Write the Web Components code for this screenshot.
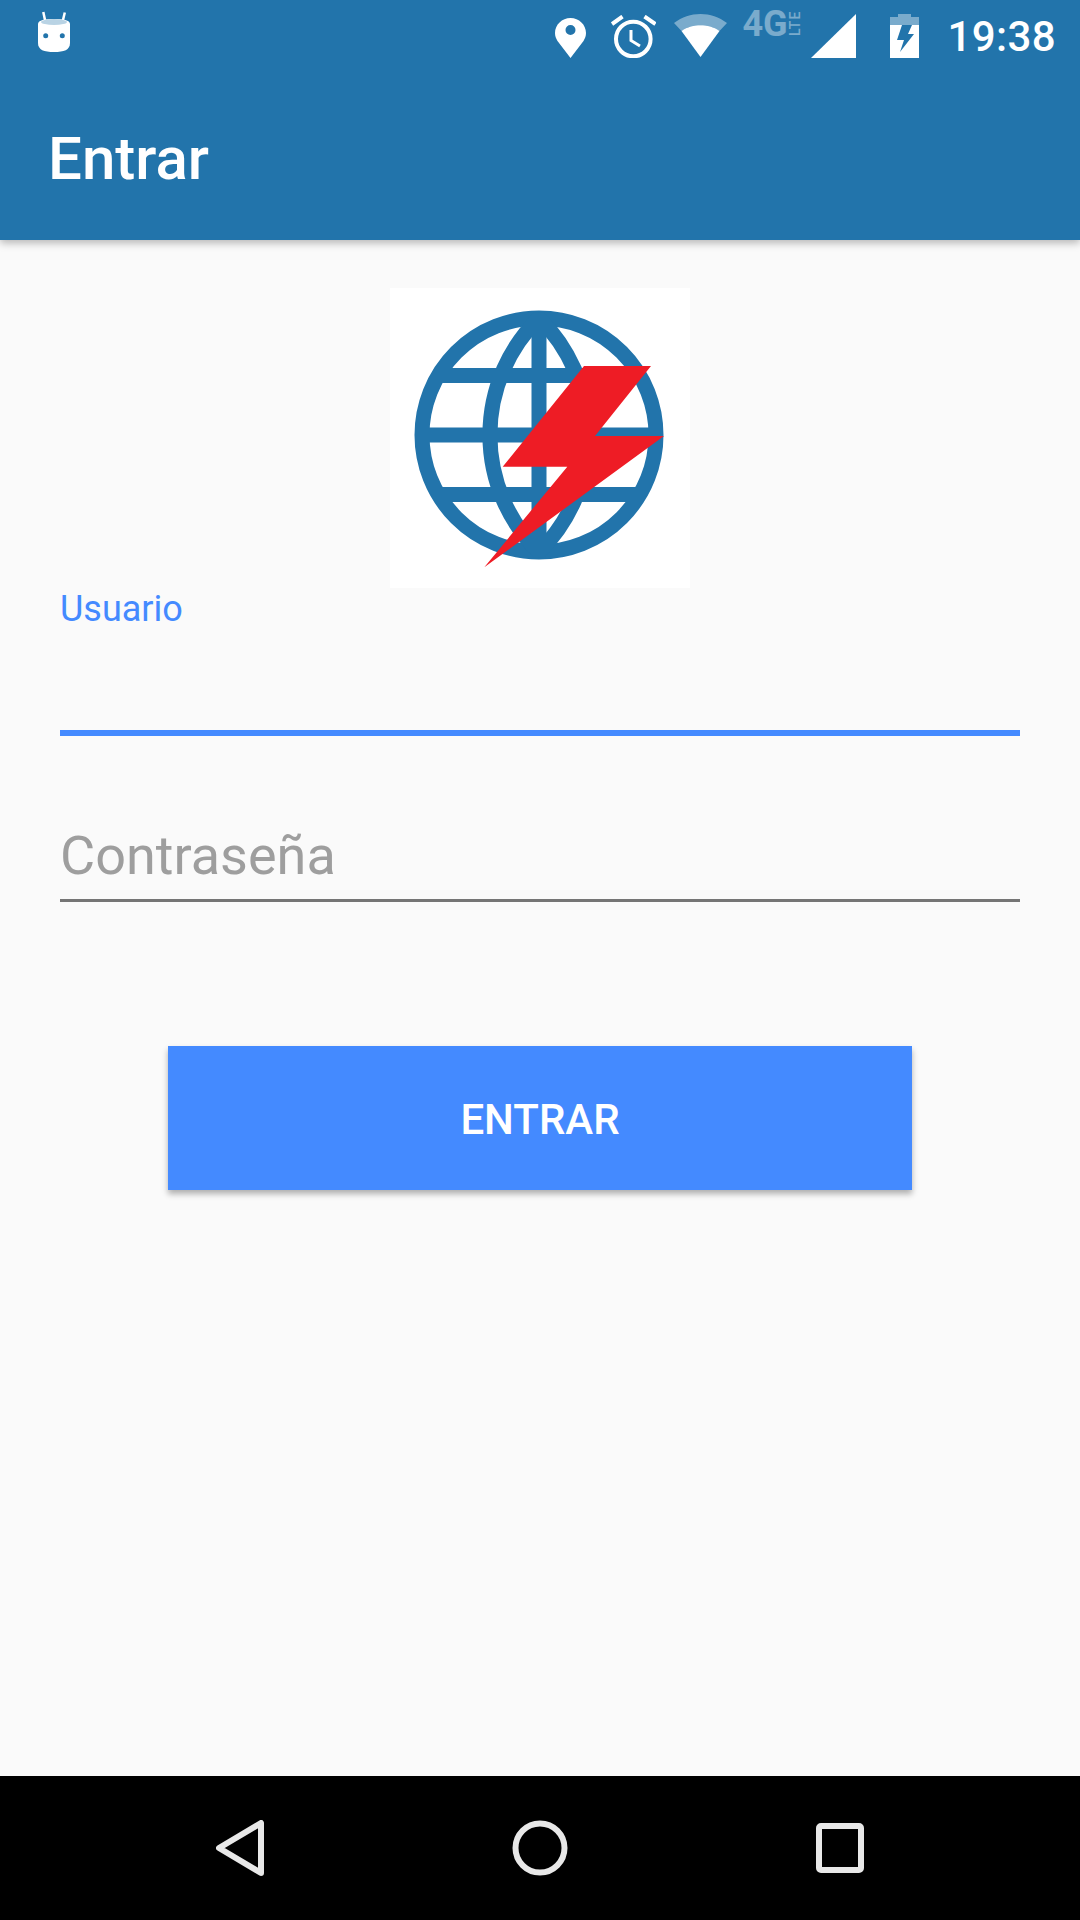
<!DOCTYPE html>
<html>
<head>
<meta charset="utf-8">
<style>
  html, body { margin: 0; padding: 0; }
  body {
    width: 1080px;
    height: 1920px;
    display: flex;
    flex-direction: column;
    background: #fafafa;
    font-family: Roboto, "Liberation Sans", sans-serif;
    overflow: hidden;
  }
  login-page { flex: 1; }
</style>
</head>
<body>
  <app-header title="Entrar"></app-header>
  <login-page>
    <brand-logo></brand-logo>
    <text-field label="Usuario" focused></text-field>
    <text-field label="Contraseña"></text-field>
    <raised-button>ENTRAR</raised-button>
  </login-page>
  <nav-bar></nav-bar>

<script>
// barra de estado + app bar
class AppHeader extends HTMLElement {
  constructor() {
    super();
    const shadow = this.attachShadow({ mode: 'open' });
    const title = this.getAttribute('title') || '';
    shadow.innerHTML = `
      <style>
        :host {
          display: block;
          height: 240px;
          background: #2274ab;
          color: #fff;
          box-shadow: 0 3px 8px rgba(0, 0, 0, 0.28);
          position: relative;
          z-index: 1;
        }
        .status {
          height: 72px;
          display: flex;
          align-items: flex-start;
          padding: 0 24px 0 37px;
        }
        svg { display: block; flex: none; }
        .spacer { flex: 1; }
        .time {
          font-size: 42px;
          font-weight: 500;
          line-height: 72px;
          margin-left: 28px;
          letter-spacing: 0.4px;
          height: 72px;
          margin-top: 1px;
        }
        .net {
          width: 58px; height: 25px; margin: 12px 2px 0 15px;
          position: relative; flex: none; opacity: .4;
          font-weight: 700; font-size: 36px; line-height: 25px;
        }
        .net small {
          position: absolute; left: 41px; top: 7px;
          width: 24px; height: 10px; text-align: center;
          font-size: 14px; line-height: 10px; font-weight: 500; letter-spacing: 1px;
          transform: rotate(-90deg);
        }
        h1 {
          margin: 3px 0 0;
          font-size: 60px;
          font-weight: 500;
          line-height: 168px;
          padding-left: 48px;
          height: 165px;
        }
      </style>
      <div class="status">
        <svg width="34" height="42" viewBox="0 0 34 42" style="margin-top:11px">
          <path d="M8 9 6.300 1M26 9 27.800 1.500" stroke="#fff" stroke-width="2.500" fill="none"/>
          <path fill="#fff" d="M1 13C1 9 8 8 17 8s16 1 16 5V32C33 39 27 41 17 41S1 39 1 32Z"/>
          <ellipse cx="17" cy="11" rx="13" ry="3" fill="#b9d3e4"/>
          <circle cx="8.700" cy="24.700" r="2.500" fill="#2274ab"/>
          <circle cx="25.300" cy="24.700" r="2.500" fill="#2274ab"/>
        </svg>
        <div class="spacer"></div>
        <svg width="31" height="40" viewBox="0 0 31 40" style="margin-top:18px">
          <path fill-rule="evenodd" fill="#fff" d="M15.500 0C7 0 0 6.700 0 15 0 18 1 20.500 2.500 23L15.500 40 28.500 23C30 20.500 31 18 31 15 31 6.700 24 0 15.500 0ZM15.500 7a5 5 0 1 1 0 10 5 5 0 0 1 0-10Z"/>
        </svg>
        <svg width="45" height="43" viewBox="0 0 45 43" style="margin:15px 0 0 25px">
          <circle cx="22.300" cy="24" r="17.300" fill="none" stroke="#fff" stroke-width="4"/>
          <path d="M20 15V25.500L29 31" fill="none" stroke="#fff" stroke-width="3"/>
          <path d="M1 9 11.500 1.500M33.500 1.500 44.500 9" fill="none" stroke="#fff" stroke-width="4"/>
        </svg>
        <svg width="53" height="43" viewBox="0 0 53 43" style="margin:14px 0 0 18px">
          <path fill="#fff" fill-opacity=".4" d="M0 9C8 3 17 0 26.500 0S45 3 53 9L45.500 17C40 13 33 11.300 26.500 11.300S13 13 7.500 17Z"/>
          <path fill="#fff" d="M7.500 17C13 13 20 11.300 26.500 11.300S40 13 45.500 17L26.500 43Z"/>
        </svg>
        <div class="net">4G<small>LTE</small></div>
        <svg width="45" height="44" viewBox="0 0 45 44" style="margin:14px 0 0 9px">
          <path fill="#fff" d="M45 0V44H0Z"/>
        </svg>
        <svg width="29" height="44" viewBox="0 0 29 44" style="margin:14px 0 0 34px">
          <path fill="#fff" fill-opacity=".4" d="M8 0H21V3H29V11H0V3H8Z"/>
          <path fill-rule="evenodd" fill="#fff" d="M0 11H12L7 26H14L10 38 24 20H18L22 11H29V44H0Z"/>
        </svg>
        <div class="time">19:38</div>
      </div>
      <h1>${title}</h1>
    `;
  }
}
customElements.define('app-header', AppHeader);

class LoginPage extends HTMLElement {
  constructor() {
    super();
    const shadow = this.attachShadow({ mode: 'open' });
    shadow.innerHTML = `
      <style>
        :host {
          display: flex;
          flex-direction: column;
          padding: 48px 60px 0;
        }
      </style>
      <slot></slot>
    `;
  }
}
customElements.define('login-page', LoginPage);

class BrandLogo extends HTMLElement {
  constructor() {
    super();
    const shadow = this.attachShadow({ mode: 'open' });
    shadow.innerHTML = `
      <style>
        :host {
          display: block;
          width: 300px;
          height: 300px;
          background: #fff;
          align-self: center;
        }
        svg { display: block; }
      </style>
      <svg width="300" height="300" viewBox="0 0 300 300">
        <g fill="none" stroke="#2274ab" stroke-width="15" stroke-linejoin="bevel">
          <circle cx="149" cy="147" r="117"/>
          <path d="M149 30A164 164 0 0 0 149 264A164 164 0 0 0 149 30Z"/>
          <path d="M149 30V264M32 147H266M48 87.500H250M48 206.500H250"/>
        </g>
        <path fill="#ee1c25" d="M194 78H261L205 148H274L94.300 279.300 177.300 178.700H112.700Z"/>
      </svg>
    `;
  }
}
customElements.define('brand-logo', BrandLogo);

// Komponen input
class TextField extends HTMLElement {
  constructor() {
    super();
    const shadow = this.attachShadow({ mode: 'open' });
    const label = this.getAttribute('label') || '';
    shadow.innerHTML = `
      <style>
        :host { display: block; height: 148px; box-sizing: border-box; }
        :host([focused]) { height: 148px; margin-bottom: 18px; }
        .box { height: 100%; display: flex; flex-direction: column; border-bottom: 3px solid #757575; box-sizing: border-box; }
        :host([focused]) .box { border-bottom: 6px solid #448aff; }
        label { font-size: 54px; line-height: 62px; color: #9e9e9e; margin-top: auto; padding-bottom: 12px; }
        :host([focused]) label { font-size: 36px; line-height: 42px; color: #448aff; margin-top: 0; padding: 0; }
      </style>
      <div class="box"><label>${label}</label></div>
    `;
  }
}
customElements.define('text-field', TextField);

class RaisedButton extends HTMLElement {
  constructor() {
    super();
    const shadow = this.attachShadow({ mode: 'open' });
    shadow.innerHTML = `
      <style>
        :host {
          display: flex;
          align-items: center;
          justify-content: center;
          align-self: center;
          box-sizing: border-box;
          width: 744px;
          height: 144px;
          padding-top: 2px;
          margin-top: 144px;
          background: #448aff;
          color: #fff;
          font-size: 42px;
          font-weight: 500;
          box-shadow: 0 4px 6px rgba(0, 0, 0, 0.3);
        }
      </style>
      <slot></slot>
    `;
  }
}
customElements.define('raised-button', RaisedButton);

class NavBar extends HTMLElement {
  constructor() {
    super();
    const shadow = this.attachShadow({ mode: 'open' });
    shadow.innerHTML = `
      <style>
        :host {
          display: flex;
          height: 144px;
          background: #000;
          align-items: center;
          justify-content: space-between;
          padding: 0 216px;
        }
        svg { display: block; }
      </style>
      <svg width="48" height="56" viewBox="0 0 48 56">
        <path fill="none" stroke="#e8e8e8" stroke-width="6" stroke-linejoin="round" d="M45 3V53L3 28Z"/>
      </svg>
      <svg width="56" height="56" viewBox="0 0 56 56">
        <circle cx="28" cy="28" r="24.500" fill="none" stroke="#e8e8e8" stroke-width="6"/>
      </svg>
      <svg width="48" height="50" viewBox="0 0 48 50">
        <rect x="3" y="3" width="42" height="44" rx="2" fill="none" stroke="#e8e8e8" stroke-width="6"/>
      </svg>
    `;
  }
}
customElements.define('nav-bar', NavBar);
</script>
</body>
</html>
